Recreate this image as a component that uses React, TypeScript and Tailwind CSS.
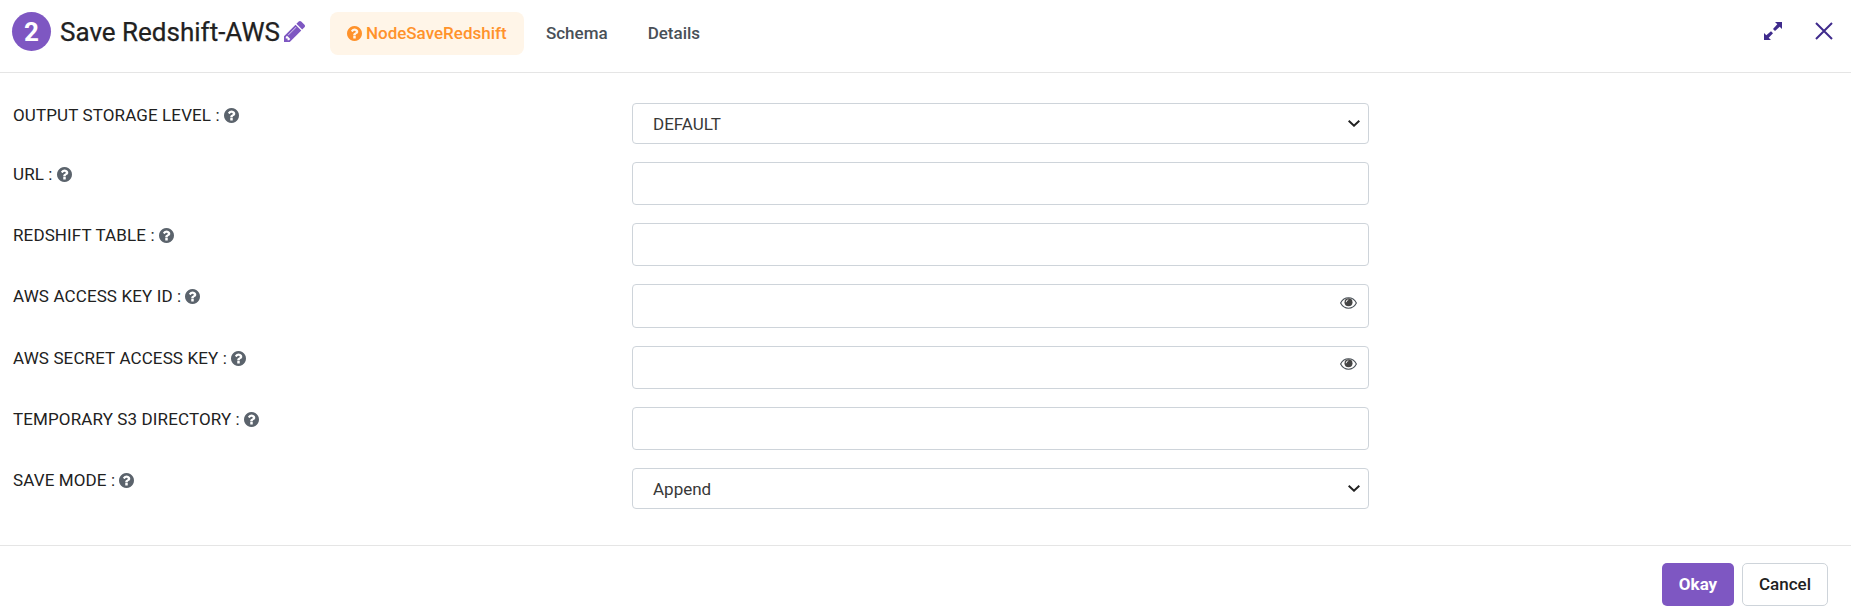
import React from "react";

type Field = { label: string; kind: "text" | "secret" | "select"; value?: string; box: string; row: string };

const fields: Field[] = [
  { label: "OUTPUT STORAGE LEVEL :", kind: "select", value: "DEFAULT", box: "h-[41px]", row: "h-[59px]" },
  { label: "URL :", kind: "text", box: "h-[43px]", row: "h-[61px]" },
  { label: "REDSHIFT TABLE :", kind: "text", box: "h-[43px]", row: "h-[61px]" },
  { label: "AWS ACCESS KEY ID :", kind: "secret", box: "h-[44px]", row: "h-[62px]" },
  { label: "AWS SECRET ACCESS KEY :", kind: "secret", box: "h-[43px]", row: "h-[61px]" },
  { label: "TEMPORARY S3 DIRECTORY :", kind: "text", box: "h-[43px]", row: "h-[61px]" },
  { label: "SAVE MODE :", kind: "select", value: "Append", box: "h-[41px]", row: "h-[41px]" },
];

function Help({ className }: { className: string }) {
  return (
    <svg viewBox="128 128 1536 1536" fill="currentColor" className={className}>
      <path d="M1024 1376v-192q0-14-9-23t-23-9h-192q-14 0-23 9t-9 23v192q0 14 9 23t23 9h192q14 0 23-9t9-23zm256-672q0-88-55.5-163t-138.5-116-170-41q-243 0-371 213-15 24 8 42l132 100q7 6 19 6 16 0 25-12 53-68 86-92 34-24 86-24 48 0 85.5 26t37.5 59q0 38-20 61t-68 45q-63 28-115.5 86.5t-52.5 125.5v36q0 14 9 23t23 9h192q14 0 23-9t9-23q0-19 21.5-49.5t54.5-49.5q32-18 49-28.5t46-35 44.5-48 28-60.5 12.5-81zm384 192q0 209-103 385.5t-279.5 279.5-385.5 103-385.5-103-279.5-279.5-103-385.5 103-385.5 279.5-279.5 385.5-103 385.5 103 279.5 279.5 103 385.5z" />
    </svg>
  );
}

function Pencil() {
  return (
    <svg viewBox="128 149 1515 1515" fill="currentColor" className="ml-1 size-[21px] text-[#7e57c2]">
      <path d="M491 1536l91-91-235-235-91 91v107h128v128h107zm523-928q0-22-22-22-10 0-17 7l-542 542q-7 7-7 17 0 22 22 22 10 0 17-7l542-542q7-7 7-17zm-54-192l416 416-832 832h-416v-416zm683 96q0 53-37 90l-166 166-416-416 166-165q36-38 90-38 53 0 91 38l235 234q37 39 37 91z" />
    </svg>
  );
}

function Eye() {
  return (
    <svg viewBox="0 0 17 12" className="mb-[7px] h-3 w-[17px]">
      <path d="M.6 6C2.4 2.6 5.2.8 8.5.8S14.600 2.600 16.400 6C14.600 9.400 11.800 11.200 8.500 11.200S2.400 9.400.6 6z" fill="none" stroke="#495057" strokeWidth="1.1" />
      <circle cx="8.500" cy="5.200" r="4" fill="#444" />
      <path d="M6.200 5.200A2.300 2.300 0 0 1 8.300 2.800" fill="none" stroke="#fff" strokeWidth=".9" />
    </svg>
  );
}

function Chevron() {
  return (
    <svg viewBox="0 0 12 7" className="h-[7px] w-3" fill="none" stroke="#212121" strokeWidth="2">
      <path d="M.7.8L6 5.700 11.300.8" />
    </svg>
  );
}

export default function App() {
  return (
    <div className="flex h-[614px] w-full flex-col bg-white font-[Roboto,sans-serif] text-[#212121]">
      <header className="flex h-[73px] items-start border-b border-[#e5e5e5] pl-3 pt-3">
        <div className="flex size-[39px] items-center justify-center rounded-full bg-[#7e57c2] text-[26px] font-bold leading-none text-white">2</div>
        <div className="ml-[9px] flex h-[39px] items-center">
          <h1 className="pt-px text-[26px] leading-[39px] [-webkit-text-stroke:0.25px]">Save Redshift-AWS</h1>
          <Pencil />
        </div>
        <nav className="ml-[25px] flex h-[43px] items-center text-[17px] font-medium text-[#495057]">
          <div className="flex h-[43px] w-[194px] items-center rounded-lg bg-[#fff5e8] pl-[17px] text-[#ff922b]">
            <Help className="mr-1 size-[15px]" />
            <span>NodeSaveRedshift</span>
          </div>
          <span className="ml-[22px]">Schema</span>
          <span className="ml-10">Details</span>
        </nav>
        <div className="ml-auto mr-[18px] flex h-[37px] items-center gap-[33px] text-[#3f2b8c]">
          <svg viewBox="0 0 18 18" className="size-[18px]" fill="currentColor">
            <path d="M11 0H18v7l-2.300-2.300-4.700 4.300-2-2L13.300 2.300zM7 18H0v-7l2.300 2.300L7 9.300l2 2L4.700 15.700z" />
          </svg>
          <svg viewBox="0 0 18 18" className="size-[18px]" fill="none" stroke="currentColor" strokeWidth="2">
            <path d="M1 1l16 16M17 1L1 17" />
          </svg>
        </div>
      </header>
      <main className="flex h-[472px] flex-col pl-[13px] pt-[30px]">
        {fields.map((f) => (
          <div key={f.label} className={`flex items-start ${f.row}`}>
            <label className="flex h-6 w-[619px] items-center text-[17px] tracking-[0.12px]">
              <span className="pt-0.5">{f.label}</span>
              <Help className="ml-1 size-[15px] text-[#5b636c]" />
            </label>
            <div className={`flex w-[737px] items-center justify-between rounded border border-[#ced4da] pl-5 pr-2 text-[17px] ${f.box}`}>
              <span className="pt-0.5 text-[#383838]">{f.value}</span>
              {f.kind === "select" && <Chevron />}
              {f.kind === "secret" && <div className="pr-[3px]"><Eye /></div>}
            </div>
          </div>
        ))}
      </main>
      <footer className="flex flex-1 items-start justify-end gap-2 border-t border-[#e5e5e5] pr-[23px] pt-[17px] text-[17px]">
        <button className="h-[43px] w-[72px] rounded-[5px] bg-[#7e57c2] font-bold text-white">Okay</button>
        <button className="h-[43px] w-[86px] rounded-[5px] border border-[#ced4da] font-medium">Cancel</button>
      </footer>
    </div>
  );
}
